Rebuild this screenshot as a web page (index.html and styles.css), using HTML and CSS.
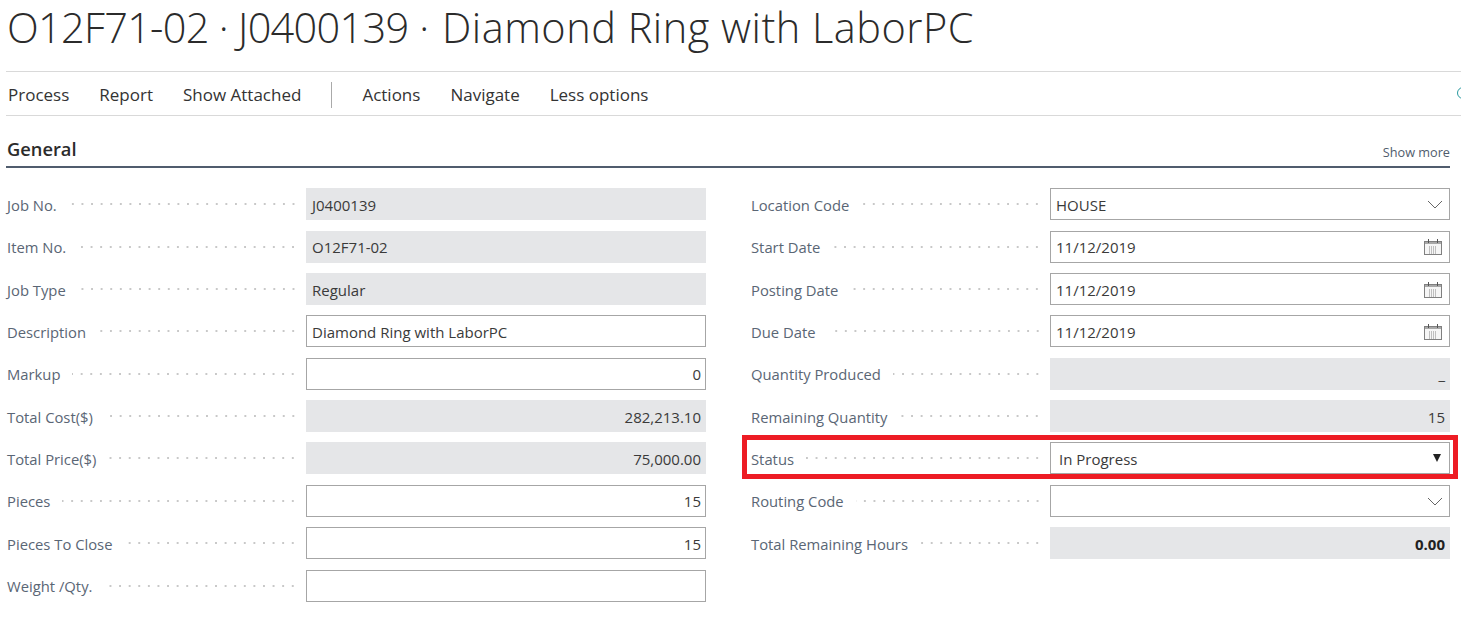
FILE: index.html
```html
<!DOCTYPE html>
<html lang="en">
<head>
  <meta charset="UTF-8" />
  <title>O12F71-02 · J0400139 · Diamond Ring with LaborPC</title>
  <link rel="stylesheet" href="styles.css">
</head>
<body>
  <h1 class="title"><span class="title-code">O12F71-02 · J0400139</span> · <span class="title-name">Diamond Ring with LaborPC</span></h1>

  <nav class="menu">
    <a>Process</a>
    <a>Report</a>
    <a>Show Attached</a>
    <span class="menu-sep"></span>
    <a>Actions</a>
    <a>Navigate</a>
    <a>Less options</a>
    <span class="menu-search"></span>
  </nav>

  <div class="section-head">
    <h2>General</h2>
    <a class="show-more">Show more</a>
  </div>

  <div class="form">
    <div class="col">
      <div class="row"><label>Job No.</label><span class="dots"></span><div class="field readonly">J0400139</div></div>
      <div class="row"><label>Item No.</label><span class="dots"></span><div class="field readonly">O12F71-02</div></div>
      <div class="row"><label>Job Type</label><span class="dots"></span><div class="field readonly">Regular</div></div>
      <div class="row"><label>Description</label><span class="dots"></span><div class="field">Diamond Ring with LaborPC</div></div>
      <div class="row"><label>Markup</label><span class="dots"></span><div class="field num">0</div></div>
      <div class="row"><label>Total Cost($)</label><span class="dots"></span><div class="field readonly num">282,213.10</div></div>
      <div class="row"><label>Total Price($)</label><span class="dots"></span><div class="field readonly num">75,000.00</div></div>
      <div class="row"><label>Pieces</label><span class="dots"></span><div class="field num">15</div></div>
      <div class="row"><label>Pieces To Close</label><span class="dots"></span><div class="field num">15</div></div>
      <div class="row"><label>Weight /Qty.</label><span class="dots"></span><div class="field"></div></div>
    </div>

    <div class="col">
      <div class="row"><label>Location Code</label><span class="dots"></span>
        <div class="field">HOUSE
          <svg class="chevron" viewBox="0 0 16 9"><path d="M1 1l7 7 7-7"/></svg>
        </div>
      </div>
      <div class="row"><label>Start Date</label><span class="dots"></span>
        <div class="field">11/12/2019
          <svg class="calendar" viewBox="0 0 18 16"><use href="#cal"/></svg>
        </div>
      </div>
      <div class="row"><label>Posting Date</label><span class="dots"></span>
        <div class="field">11/12/2019
          <svg class="calendar" viewBox="0 0 18 16"><use href="#cal"/></svg>
        </div>
      </div>
      <div class="row"><label>Due Date</label><span class="dots"></span>
        <div class="field">11/12/2019
          <svg class="calendar" viewBox="0 0 18 16"><use href="#cal"/></svg>
        </div>
      </div>
      <div class="row"><label>Quantity Produced</label><span class="dots"></span><div class="field readonly num">_</div></div>
      <div class="row"><label>Remaining Quantity</label><span class="dots"></span><div class="field readonly num">15</div></div>
      <div class="row row-marked"><label>Status</label><span class="dots"></span>
        <div class="field select">In Progress<span class="select-arrow"></span></div>
      </div>
      <div class="row"><label>Routing Code</label><span class="dots"></span>
        <div class="field">
          <svg class="chevron" viewBox="0 0 16 9"><path d="M1 1l7 7 7-7"/></svg>
        </div>
      </div>
      <div class="row"><label>Total Remaining Hours</label><span class="dots"></span><div class="field readonly num strong">0.00</div></div>
    </div>
  </div>

  <svg class="defs" width="0" height="0">
    <symbol id="cal" viewBox="0 0 18 16">
      <rect x="0.5" y="2.5" width="17" height="13" fill="#f6f6f6" stroke="#808080"/>
      <rect x="1" y="3" width="16" height="2" fill="#a8a8a8"/>
      <path d="M4.5 0v4M13.5 0v4" stroke="#555" fill="none"/>
      <path d="M5 8h8M5 10h8M5 12h8M5 14h8" stroke="#888" stroke-dasharray="1 1" fill="none"/>
    </symbol>
  </svg>
</body>
</html>
```

FILE: styles.css
```css
html, body {
  margin: 0;
  overflow: hidden;
}
body {
  width: 1461px;
  height: 629px;
  background: #fff;
  color: #333;
  font-family: "Open Sans", sans-serif;
  font-size: 15px;
}
.title {
  margin: 0;
  height: 71px;
  padding-left: 7px;
  font-size: 41.5px;
  font-weight: 300;
  line-height: 55px;
  color: #2b2b2b;
  white-space: nowrap;
}
.title-code {
  letter-spacing: -0.7px;
}
.title-name {
  margin-left: 2px;
  letter-spacing: 0.5px;
}
.menu {
  display: flex;
  align-items: center;
  position: relative;
  box-sizing: border-box;
  height: 45px;
  margin-left: 6px;
  padding: 2px 0 0 2px;
  border-top: 1px solid #d9d9d9;
  border-bottom: 1px solid #d9d9d9;
  font-size: 17px;
  color: #333;
}
.menu a {
  margin-right: 30px;
}
.menu-sep {
  width: 1px;
  height: 26px;
  background: #aaa;
  margin-right: 30px;
}
.menu-search {
  position: absolute;
  left: 1451px;
  top: 15px;
  width: 10px;
  height: 10px;
  border: 1.5px solid #2a9aa0;
  border-radius: 50%;
}
.section-head {
  display: flex;
  justify-content: space-between;
  align-items: flex-end;
  box-sizing: border-box;
  height: 52px;
  width: 1444px;
  margin-left: 6px;
  padding: 0 0 5px 1px;
  border-bottom: 2px solid #505c6d;
}
.section-head h2 {
  margin: 0;
  font-size: 18.3px;
  font-weight: 600;
  color: #2b2b2b;
}
.show-more {
  font-size: 12.7px;
  color: #505c6d;
}
.form {
  display: flex;
  padding: 20.15px 0 0 7px;
  gap: 45px;
}
.col {
  display: flex;
  flex-direction: column;
  gap: 10.38px;
  width: 699px;
}
.row {
  display: flex;
  align-items: center;
  position: relative;
  height: 32px;
}
.row label {
  padding-top: 1.4px;
  color: #5a6675;
  font-size: 14.8px;
  white-space: nowrap;
}
.dots {
  flex: 1;
  height: 2px;
  margin: 0 8px 0 12px;
  background: radial-gradient(circle, #c8c8c8 1px, transparent 1px) right center / 9.6px 2px repeat-x;
}
.field {
  display: flex;
  align-items: center;
  justify-content: space-between;
  box-sizing: border-box;
  width: 400px;
  height: 32px;
  padding: 1.4px 5px 0;
  border: 1px solid #a6a6a6;
  background: #fff;
  color: #3a3a3a;
  font-size: 15px;
}
.field.readonly {
  background: #e5e6e8;
  border-color: #e5e6e8;
}
.field.num {
  justify-content: flex-end;
  padding-right: 4px;
}
.field.strong {
  font-weight: 700;
  color: #212121;
}
.field.select {
  padding-left: 8px;
}
.select-arrow {
  width: 0;
  height: 0;
  margin: -2px 3px 0 0;
  border-left: 4px solid transparent;
  border-right: 4px solid transparent;
  border-top: 8px solid #222;
}
.field svg {
  margin-left: auto;
}
.chevron {
  width: 16px;
  height: 9px;
  margin-right: 1px;
  fill: none;
  stroke: #666;
  stroke-width: 1;
}
.calendar {
  width: 18px;
  height: 16px;
  margin-right: 2px;
}
.row-marked::after {
  content: "";
  position: absolute;
  left: -9px;
  right: -8px;
  top: -7px;
  bottom: -5px;
  border: 5px solid #ed1c24;
  pointer-events: none;
}
.defs {
  position: absolute;
}
```
